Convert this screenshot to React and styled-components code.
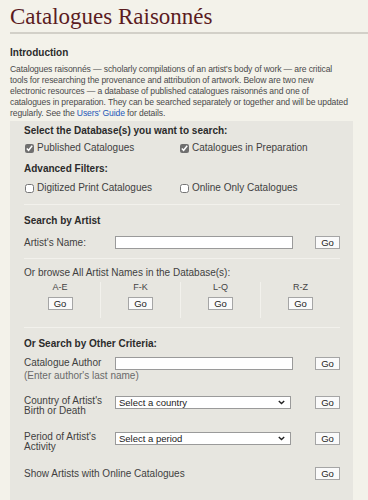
import styled, { createGlobalStyle } from "styled-components";

const GlobalStyle = createGlobalStyle`
  body {
    margin: 0;
    background: #f3f2ea;
    font-family: "Liberation Sans", Arial, sans-serif;
    color: #3a3a3a;
  }
`;

const Page = styled.div`
  padding: 0 0 0 10px;
`;

const Title = styled.h1`
  margin: 0;
  padding-top: 4px;
  height: 28px;
  font-family: "Liberation Serif", "DejaVu Serif", serif;
  font-weight: normal;
  font-size: 23px;
  line-height: 26px;
  color: #5b1c1f;
`;

const Rule = styled.div`
  height: 2px;
  background: #d2d0c8;
  margin-bottom: 13px;
`;

const Heading = styled.div`
  font-weight: bold;
  font-size: 10px;
  line-height: 12px;
  color: #2b2b2b;
`;

const Intro = styled.p`
  margin: 5px 0 0;
  white-space: nowrap;
  font-size: 8.6px;
  letter-spacing: -0.12px;
  line-height: 11px;
  color: #4a4a4a;
`;

const Link = styled.a`
  color: #2458b8;
  text-decoration: none;
`;

const Panel = styled.div`
  margin-top: 2px;
  width: 343px;
  background: #e7e6e0;
  padding: 4px 13px 24px 14px;
  box-sizing: border-box;
`;

const CheckGrid = styled.div`
  display: grid;
  grid-template-columns: 155px 1fr;
  margin: ${({ $m }) => $m};
  padding-left: 1px;
`;

const CheckLabel = styled.label`
  display: flex;
  align-items: center;
  gap: 3px;
  font-size: 10px;
  line-height: 12px;
  color: #3f3f3f;
`;

const Box = styled.input`
  width: 9px;
  height: 9px;
  margin: 0;
  accent-color: #6f6f6f;
`;

const Divider = styled.div`
  height: 1px;
  background: #f2f1ec;
  margin: ${({ $m }) => $m || "0"};
`;

const FormRow = styled.div`
  display: grid;
  grid-template-columns: 91px 180px 1fr;
  align-items: ${({ $top }) => ($top ? "start" : "center")};
  margin-top: ${({ $mt }) => $mt || 0}px;
`;

const RowLabel = styled.div`
  font-size: 10px;
  line-height: ${({ $lh }) => $lh || "9.5px"};
  white-space: nowrap;
  color: #3f3f3f;
  grid-column: ${({ $span }) => ($span ? "1 / 3" : "auto")};
`;

const Hint = styled.div`
  font-size: 10px;
  line-height: 12px;
  white-space: nowrap;
  color: #6a6a6a;
  margin-top: 1px;
`;

const TextInput = styled.input`
  width: 178px;
  height: 13px;
  box-sizing: border-box;
  margin: 0;
  border: 1px solid #9a9a9a;
  background: #fff;
  padding: 0 3px;
`;

const Select = styled.div`
  width: 176px;
  height: 13px;
  box-sizing: border-box;
  border: 1px solid #9a9a9a;
  background: #fff;
  display: flex;
  align-items: center;
  justify-content: space-between;
  padding: 0 5px 0 3px;
  font-size: 9.5px;
  color: #222;
`;

const Go = styled.button`
  justify-self: end;
  width: 25px;
  height: 13px;
  padding: 0;
  margin: 0;
  border: 1px solid #a5a5a5;
  background: #fafafa;
  font-family: "Liberation Sans", Arial, sans-serif;
  font-size: 9.5px;
  line-height: 11px;
  color: #222;
`;

const BrowseText = styled.div`
  font-size: 10px;
  line-height: 12px;
  color: #3f3f3f;
  margin-top: 8px;
`;

const Letters = styled.div`
  display: grid;
  grid-template-columns: repeat(4, 80px);
  margin: 3px 0 0 -4px;
`;

const LetterCell = styled.div`
  display: flex;
  flex-direction: column;
  align-items: center;
  padding: 0 0 8px;
  border-left: ${({ $first }) => ($first ? "none" : "1px solid #f2f1ec")};
`;

const LetterLabel = styled.div`
  font-size: 9px;
  line-height: 10px;
  color: #444;
  margin-bottom: 5px;
`;

const Chevron = () => (
  <svg width="7" height="5" viewBox="0 0 7 5">
    <path d="M0.8 1 L3.5 3.6 L6.2 1" fill="none" stroke="#222" strokeWidth="1.4" />
  </svg>
);

const letters = ["A-E", "F-K", "L-Q", "R-Z"];

export default function App() {
  return (
    <Page>
      <GlobalStyle />
      <Title>Catalogues Raisonnés</Title>
      <Rule />
      <Heading>Introduction</Heading>
      <Intro>
        Catalogues raisonnés — scholarly compilations of an artist's body of work — are critical
        <br />
        tools for researching the provenance and attribution of artwork. Below are two new
        <br />
        electronic resources — a database of published catalogues raisonnés and one of
        <br />
        catalogues in preparation. They can be searched separately or together and will be updated
        <br />
        regularly. See the <Link href="#">Users' Guide</Link> for details.
      </Intro>

      <Panel>
        <Heading>Select the Database(s) you want to search:</Heading>
        <CheckGrid $m="5px 0 9px">
          <CheckLabel>
            <Box type="checkbox" defaultChecked />
            Published Catalogues
          </CheckLabel>
          <CheckLabel>
            <Box type="checkbox" defaultChecked />
            Catalogues in Preparation
          </CheckLabel>
        </CheckGrid>
        <Heading>Advanced Filters:</Heading>
        <CheckGrid $m="7px 0 5px">
          <CheckLabel>
            <Box type="checkbox" />
            Digitized Print Catalogues
          </CheckLabel>
          <CheckLabel>
            <Box type="checkbox" />
            Online Only Catalogues
          </CheckLabel>
        </CheckGrid>
        <Divider $m="10px 0 10px" />

        <Heading>Search by Artist</Heading>
        <FormRow $mt={9}>
          <RowLabel>Artist's Name:</RowLabel>
          <TextInput />
          <Go>Go</Go>
        </FormRow>
        <Divider $m="9px 0 0" />
        <BrowseText>Or browse All Artist Names in the Database(s):</BrowseText>
        <Letters>
          {letters.map((l, i) => (
            <LetterCell key={l} $first={i === 0}>
              <LetterLabel>{l}</LetterLabel>
              <Go>Go</Go>
            </LetterCell>
          ))}
        </Letters>
        <Divider $m="9px 0 10px" />

        <Heading>Or Search by Other Criteria:</Heading>
        <FormRow $top $mt={7}>
          <div>
            <RowLabel $lh="12px">Catalogue Author</RowLabel>
            <Hint>(Enter author's last name)</Hint>
          </div>
          <TextInput />
          <Go>Go</Go>
        </FormRow>
        <FormRow $top $mt={14}>
          <RowLabel>
            Country of Artist's
            <br />
            Birth or Death
          </RowLabel>
          <Select>
            Select a country
            <Chevron />
          </Select>
          <Go>Go</Go>
        </FormRow>
        <FormRow $top $mt={17}>
          <RowLabel>
            Period of Artist's
            <br />
            Activity
          </RowLabel>
          <Select>
            Select a period
            <Chevron />
          </Select>
          <Go>Go</Go>
        </FormRow>
        <FormRow $mt={16}>
          <RowLabel $span $lh="12px">
            Show Artists with Online Catalogues
          </RowLabel>
          <Go>Go</Go>
        </FormRow>
      </Panel>
    </Page>
  );
}
